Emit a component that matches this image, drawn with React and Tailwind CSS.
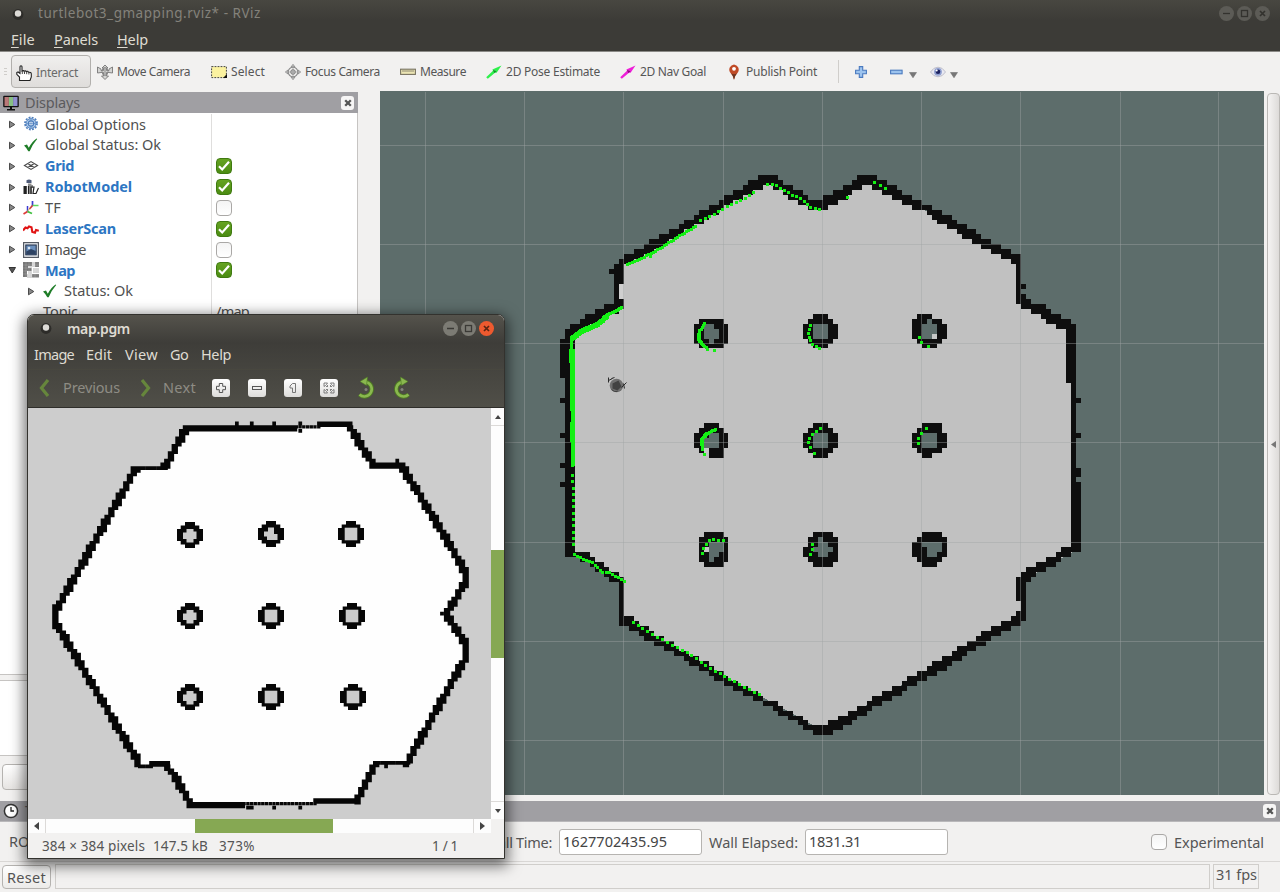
import { useLayoutEffect, useRef } from "react";

/* Single-line label whose tracking is tuned so that it spans exactly w pixels. */
function Label({ w, children, className = "" }) {
  const ref = useRef(null);
  useLayoutEffect(() => {
    const el = ref.current;
    el.style.letterSpacing = "0px";
    const natural = el.getBoundingClientRect().width;
    el.style.letterSpacing = (w - natural) / String(el.textContent).length + "px";
  }, [w]);
  return (
    <span className={"inline-block shrink-0 whitespace-pre " + className} ref={ref}>
      {children}
    </span>
  );
}

/* ---------- occupancy grid of the 3D view ---------- */
const CELL = 4.96;
const OX = 822.7 - 380;
const OY = 442.7 - 92;

// [row, firstCol, endCol]
const WALL_SPANS = [
  [-54, -13, -9], [-53, -15, -8], [-52, -16, -12], [-52, -10, -6], [-51, -18, -14], [-51, -8, -4],
  [-50, -20, -16], [-50, -7, -3], [-49, -21, -18], [-49, -5, 3], [-48, -23, -20], [-48, -3, 1],
  [-47, -25, -21], [-46, -26, -23], [-45, -28, -24], [-44, -29, -26], [-43, -31, -28], [-42, -33, -29],
  [-41, -35, -31], [-40, -36, -32], [-39, -38, -34], [-38, -40, -36], [-37, -41, -38],
  [-36, -42, -40], [-35, -43, -40], [-34, -42, -40], [-33, -42, -40], [-32, -42, -41], [-31, -42, -41], [-30, -42, -41],
  [-29, -42, -40], [-28, -44, -40], [-27, -46, -41], [-26, -48, -43], [-25, -49, -45], [-24, -51, -47], [-23, -52, -49],
  [-54, 7, 11], [-53, 6, 13], [-52, 4, 8], [-52, 10, 15], [-51, 2, 6], [-51, 12, 16], [-50, 0, 5], [-50, 14, 18],
  [-49, 16, 20], [-48, 18, 20], [-48, 20, 22], [-47, 21, 24], [-46, 22, 26], [-45, 23, 27], [-44, 25, 29],
  [-43, 27, 31], [-42, 28, 32], [-41, 30, 34], [-40, 32, 36], [-39, 34, 38], [-38, 36, 40], [-37, 38, 40],
  [-32, 40, 41], [-30, 40, 41], [-29, 40, 42], [-28, 40, 45], [-27, 42, 46], [-26, 44, 48], [-25, 45, 50], [-24, 47, 51],
  [-9, 51, 52], [-2, 51, 52], [5, 51, 52], [6, 51, 52],
  [21, 48, 52], [22, 47, 50], [23, 45, 48], [24, 43, 47], [25, 41, 45], [26, 40, 43], [27, 39, 42],
  [34, 39, 41], [35, 38, 41], [36, 36, 40], [37, 34, 38], [38, 32, 36], [39, 31, 34], [40, 29, 33], [41, 27, 31],
  [42, 26, 29], [43, 24, 28], [44, 22, 26], [45, 21, 25], [46, 19, 23], [47, 17, 21], [48, 16, 19], [49, 14, 17],
  [50, 12, 16], [51, 10, 14], [52, 9, 12], [53, 7, 10], [54, 5, 9], [55, 3, 7], [56, 1, 6], [57, -4, 4], [58, -2, 2],
  [-9, -53, -52], [-2, -53, -52], [4, -53, -52], [8, -53, -52],
  [22, -52, -47], [23, -49, -46], [24, -47, -44], [25, -46, -43], [26, -44, -41], [27, -43, -40],
  [35, -40, -38], [36, -40, -37], [37, -39, -35], [38, -37, -34], [39, -36, -32], [40, -34, -30], [41, -32, -29],
  [42, -30, -27], [43, -28, -25], [44, -27, -23], [45, -25, -22], [46, -23, -20], [47, -22, -19], [48, -20, -17],
  [49, -18, -15], [50, -16, -13], [51, -14, -12], [52, -12, -9], [53, -10, -8], [54, -9, -6], [55, -7, -4], [56, -5, -3],
];

// [col, row, width, height]
const WALL_BLOCKS = [
  [-53, -21, 1, 8], [-52, -23, 2, 46], [39, -37, 1, 9], [49, -24, 2, 12], [50, -13, 1, 22], [50, 8, 2, 14],
  [40, 27, 1, 9], [39, 27, 1, 5], [-41, 28, 1, 9],
];

const STANDARD = ["..###..", ".#####.", "##ooo##", "##ooo##", "##ooo##", ".#####.", "..###.."];
const PILLARS = [
  [-26, -26, [".......", ".#####.", "##oo###", "##ooo##", "##ooo##", "###o###", ".#####."]],
  [-4, -26, STANDARD],
  [18, -26, [".###...", "###o##.", "##ooo##", "##ooo##", "##oog##", ".#####.", "..###.."]],
  [-26, -4, ["..###..", ".#####.", "###oo##", "##ooo##", "##ooo##", ".#g###.", "...###."]],
  [-4, -4, STANDARD],
  [18, -4, ["..####.", ".#####.", "##ooo##", "##ooo##", "##ooo##", ".#####.", "..##..."]],
  [-26, 18, ["..####.", ".######", ".##ooo#", ".#gooo#", ".##oo##", ".##o###", "..####."]],
  [-4, 18, ["..####.", ".##o###", ".##oo##", "##oooo#", "###oo##", ".######", "..####."]],
  [18, 18, ["..####.", ".######", "##oooo#", "###ooo#", "###oo##", ".#####.", "..###.."]],
];

const FREE_SPACE = [
  [-11, -53], [-1, -48], [9, -53], [39, -37], [39.5, -29], [50, -24], [50.5, 22], [40, 28], [40, 35], [0, 58],
  [-40, 36], [-40, 28], [-51, 22], [-51, -23], [-41, -28], [-41, -36.5], [-39, -36.8],
];

// Laser hits: [spacing, points]
const SCANS = [
  [2.6, [627, 264, 645, 256, 660, 248, 680, 235, 697, 225]],
  [5, [700, 220, 713, 214, 727, 206, 741, 200, 757, 190]],
  [4.6, [767, 184, 774, 184, 790, 194, 802, 199, 808, 206, 822, 210]],
  [1.2, [571, 337, 580, 330, 597, 323, 606, 315, 622, 307]],
  [2, [572, 339, 582, 332, 598, 325, 608, 316]],
  [1.4, [571, 338, 571, 380, 572, 440, 572, 466]],
  [2.2, [573, 350, 573, 400, 573, 466]],
  [2.8, [570, 350, 572, 400, 571, 440]],
  [6.3, [572, 475, 573, 500, 573, 548]],
  [3.4, [574, 554, 584, 559, 592, 562, 602, 572, 608, 572, 626, 582]],
  [5.6, [633, 622, 650, 633, 670, 644, 690, 654, 708, 667, 730, 679, 762, 696]],
  [2.2, [704, 323, 699, 331, 699, 341, 705, 347, 709, 350]],
  [1.6, [698, 334, 698, 339, 704, 346]],
  [4, [810, 325, 808, 335, 811, 343, 821, 349]],
  [1.6, [715, 429, 705, 434, 701, 440, 702, 450]],
  [2, [708, 433, 702, 438, 702, 445]],
  [5, [820, 428, 811, 434, 808, 441, 811, 450]],
  [5, [702, 553, 703, 547, 710, 539, 725, 540]],
  [5, [810, 554, 812, 548, 811, 540]],
];
const STRAY_HITS = [
  [874, 182], [880, 185], [885, 188], [847, 197], [919, 337], [921, 342], [928, 346], [926, 428], [921, 433], [918, 438],
  [918, 443], [714, 350], [704, 454], [814, 453], [650, 256], [648, 254],
];

function scanHits() {
  const hits = STRAY_HITS.slice();
  SCANS.forEach(([step, p]) => {
    let carry = 0;
    for (let i = 0; i + 3 < p.length; i += 2) {
      const dx = p[i + 2] - p[i];
      const dy = p[i + 3] - p[i + 1];
      const len = Math.hypot(dx, dy);
      let d = carry;
      for (; d < len; d += step) hits.push([p[i] + (dx * d) / len, p[i + 1] + (dy * d) / len]);
      carry = d - len;
    }
  });
  return hits;
}

function cellRect(c, r, w, h) {
  const x0 = Math.round(OX + c * CELL);
  const y0 = Math.round(OY + r * CELL);
  const x1 = Math.round(OX + (c + w) * CELL);
  const y1 = Math.round(OY + (r + h) * CELL);
  return `M${x0} ${y0}H${x1}V${y1}H${x0}z`;
}

function SceneView() {
  let wall = "";
  let unknown = "";
  let faint = "";
  WALL_SPANS.forEach(([r, a, b]) => (wall += cellRect(a, r, b - a, 1)));
  WALL_BLOCKS.forEach(([c, r, w, h]) => (wall += cellRect(c, r, w, h)));
  PILLARS.forEach(([c, r, rows]) =>
    rows.forEach((line, j) =>
      [...line].forEach((ch, i) => {
        if (ch === "#") wall += cellRect(c + i, r + j, 1, 1);
        if (ch === "o") unknown += cellRect(c + i, r + j, 1, 1);
        if (ch === "g") faint += cellRect(c + i, r + j, 1, 1);
      })
    )
  );
  const free = FREE_SPACE.map(([c, r]) => `${OX + c * CELL},${OY + r * CELL}`).join(" ");
  const hits = scanHits()
    .map(([x, y]) => `M${Math.round(x - 380) - 1} ${Math.round(y - 92) - 1}h3v3h-3z`)
    .join("");
  return (
    <svg className="block h-[703px] w-[884px] bg-[#5d6d6b]" viewBox="0 0 884 703" shapeRendering="crispEdges">
      <polygon points={free} fill="#c1c1c1" />
      <path d={unknown} fill="#5d6d6b" />
      <path d={faint} fill="#c6c8c7" />
      <path d={wall} fill="#0e0e0e" />
      <path d={cellRect(-41, -32, 1, 3)} fill="#cfcfcf" />
      <g fill="#a0a5a4" fillOpacity=".42">
        {[45, 144, 243, 343, 442, 541, 640, 740, 838].map((x) => (
          <rect key={x} x={x} y="0" width="1" height="703" />
        ))}
        {[53, 152, 251, 350, 450, 549, 648].map((y) => (
          <rect key={y} x="0" y={y} width="884" height="1" />
        ))}
      </g>
      <path d={hits} fill="#14f014" />
      <g shapeRendering="auto" transform="translate(236.5 293.5)">
        <circle r="6.8" fill="#6f6f6f" />
        <path d="M-4-2L2-5 5 1 1 5-4 3z" fill="#424242" />
        <path d="M-8-8v5M-8-5l4-2M-5-7l3-1M7-2l1 5M5 2l5-5" stroke="#2b2b2b" strokeWidth="1" fill="none" />
        <path d="M-5 4l3 2 3 0" stroke="#444" fill="none" />
      </g>
    </svg>
  );
}

/* ---------- map picture in the viewer ---------- */
const PX = 3.73;
// [x0, y0, x1, y1, brush]
const EDGES = [
  [187, 429, 294, 429, 1.7], [294, 427, 318, 427, 0.9], [319, 425, 349, 425, 1.5], [350, 427, 373, 464, 1.7], [373, 465, 400, 465, 1.7],
  [401, 465, 467, 574, 1.7], [467, 574, 467, 581, 1.7], [467, 581, 447, 613, 1.7], [447, 616, 467, 646, 1.7], [467, 646, 467, 655, 1.7],
  [467, 655, 407, 763, 1.7], [407, 763, 376, 763, 1], [376, 764, 357, 801, 1.7], [357, 801, 315, 802, 1.5], [315, 804, 190, 804, 0.9],
  [241, 806, 191, 806, 1.7], [190, 803, 168, 766, 1.7], [168, 765, 152, 765, 1.6], [152, 767, 140, 767, 1], [139, 764, 55, 622, 1.7], [55, 622, 55, 612, 1.7],
  [55, 612, 136, 468, 1.7], [136, 467, 165, 467, 1], [165, 466, 186, 430, 1.7],
];
const SPECKS = [
  [238, 423], [253, 423], [275, 423], [301, 423], [301, 430], [397, 460], [443, 615], [247, 808], [251, 808], [275, 808], [301, 808], [386, 767],
];
const SMALL_PILLARS = [
  [190, 535], [271, 534], [351, 534], [190, 616], [271, 616], [352, 616], [190, 697], [271, 697], [353, 697],
];

function MapPicture() {
  let d = "";
  const put = (x, y, s) => {
    const q = (v) => Math.round(v / PX) * PX;
    const h = s * PX;
    d += `M${(q(x - h / 2) - 28).toFixed(1)} ${(q(y - h / 2) - 408).toFixed(1)}h${h}v${h}h${-h}z`;
  };
  EDGES.forEach(([x0, y0, x1, y1, s]) => {
    const n = Math.max(1, Math.round((Math.max(Math.abs(x1 - x0), Math.abs(y1 - y0)) * 2) / PX));
    for (let i = 0; i <= n; i++) put(x0 + ((x1 - x0) * i) / n, y0 + ((y1 - y0) * i) / n, s);
  });
  SPECKS.forEach(([x, y]) => put(x, y, 1));
  return (
    <svg className="block h-[411px] w-[463px] bg-[#cdcdcd]" viewBox="0 0 463 411">
      <path
        d="M159 20L269 20 290 18 321 18 344 57 372 57 439 167 439 172 419 207 439 238 439 246 379 355 348 355 329 394 162 397 140 358 111 358 27 212 27 205 108 59 138 59z"
        fill="#fefefe"
      />
      <path d={d} fill="#060606" />
      {SMALL_PILLARS.map(([x, y], i) => (
        <g key={i} transform={`translate(${x - 28} ${y - 408})`}>
          <path d="M-5-13H5V-9.500H9.300V-6H13V6H9.300V9.500H5V13H-5V9.500H-9.300V6H-13V-6H-9.300V-9.500H-5z" fill="#070707" />
          <path
            d={
              i % 3 === 0
                ? "M-7-2.500H-3.500V-6H3.500V-3.500H6.500V4H3.500V7.500H-3.500V4H-7z"
                : i === 1
                ? "M-7-2.500H-3V-6.500H3V0H6.500V6H-4V2.500H-7z"
                : "M-6.300-6.300H6.300V6.300H-6.300z"
            }
            fill="#cbcbcb"
          />
        </g>
      ))}
    </svg>
  );
}

/* ---------- icons ---------- */
const I = ({ children, size = "h-4 w-4", box = "0 0 16 16" }) => (
  <svg className={"block shrink-0 " + size} viewBox={box} fill="none">
    {children}
  </svg>
);

const HandIcon = () => (
  <I>
    <path
      d="M3.500 15.500V12L.8 9.300V7.500L2 7 4 8.500V1.800Q4 .8 5 .8T6 1.800V6Q7.500 5 8 6.300 9.500 5.300 10.200 6.600 12 5.800 12.500 7.200 15.300 7 15.300 9V12L14 15.500z"
      fill="#fff"
      stroke="#222"
      strokeWidth="1.100"
    />
    <path d="M6.300 6V9M8.500 6.500V9M10.700 7V9.200M12.900 7.500V9.500" stroke="#333" strokeWidth=".9" />
  </I>
);
const MoveIcon = () => (
  <I>
    <path d="M8 1L11 4H9.500V6.500H12V5L15.500 3V9L12 8.500H9.500V12H11.500L8 15.500 4.500 12H6.500V8.500H4L.5 9V3L4 5V6.500H6.500V4H5z" fill="#d5d5d3" stroke="#777" strokeWidth=".9" />
    <ellipse cx="8" cy="7.500" rx="3" ry="4" stroke="#8b8b8b" />
    <path d="M8 4V11" stroke="#8b8b8b" />
  </I>
);
const SelectIcon = () => (
  <I>
    <rect x=".6" y="2.600" width="14.800" height="11" fill="#fbf2a0" stroke="#444" strokeDasharray="1.800 1.200" />
    <path d="M16 10V14H12z" fill="#111" />
  </I>
);
const FocusIcon = () => (
  <I>
    <path d="M8 .3L10 3H6zM8 15.700L6 13H10zM.3 8L3 6V10zM15.700 8L13 10V6z" fill="#ccc" stroke="#888" strokeWidth=".8" />
    <circle cx="8" cy="8" r="4.800" stroke="#8c8c8c" strokeWidth="1.200" />
    <circle cx="8" cy="8" r="2.300" fill="#c5c5c5" stroke="#7c7c7c" />
    <path d="M8 3V13M3 8H13" stroke="#999" strokeWidth=".7" />
  </I>
);
const RulerIcon = () => (
  <I>
    <rect x=".6" y="5.200" width="14.800" height="5.200" fill="#ece5b4" stroke="#777260" strokeWidth="1.100" />
    <path d="M3 6V8M5 6V8M7 6V8M9 6V8M11 6V8M13 6V8" stroke="#777260" strokeWidth=".8" />
  </I>
);
const ArrowIcon = ({ fill, dark }) => (
  <I>
    <path d="M15.500 1.500L10.600 8.800 9 8.800 1.800 14.800.2 13.200 7 6.800 6.400 5.500z" fill={fill} />
    <path d="M7 6L10.600 7.300 8.200 9z" fill={dark} />
  </I>
);
const PinIcon = () => (
  <I>
    <path d="M8 15.800Q7.300 11.800 4 8.300A5.300 5.300 0 0 1 8 .4 5.300 5.300 0 0 1 12 8.300Q8.700 11.800 8 15.800z" fill="#c04a26" />
    <path d="M8 15.800Q7.300 11.800 5 9.300 8 11 11 9.300 8.700 11.800 8 15.800z" fill="#6b3420" />
    <circle cx="8" cy="4.800" r="1.900" fill="#fff" />
  </I>
);
const PlusIcon = () => (
  <I size="h-3 w-3" box="0 0 12 12">
    <path d="M4.300.6H7.700V4.300H11.400V7.700H7.700V11.400H4.300V7.700H.6V4.300H4.300z" fill="#9cc3ee" stroke="#4a7abf" strokeWidth="1.100" />
  </I>
);
const MinusIcon = () => (
  <I size="h-3 w-[13px]" box="0 0 13 12">
    <rect x=".6" y="4.200" width="11.500" height="3.600" fill="#9cc3ee" stroke="#4a7abf" strokeWidth="1.100" />
  </I>
);
const EyeIcon = () => (
  <I>
    <path d="M.5 8Q3.500 3.200 8 3.200T15.500 8Q12.500 12.800 8 12.800T.5 8z" fill="#e9e9f2" stroke="#bdbdc9" />
    <circle cx="8" cy="7.800" r="3.900" fill="#8f9fd0" />
    <circle cx="8" cy="7.800" r="2.300" fill="#1c2260" />
    <circle cx="6.700" cy="6.500" r="1" fill="#fff" />
  </I>
);
const DropIcon = () => (
  <I size="h-[6px] w-2" box="0 0 8 6">
    <path d="M.5.5H7.500L4 5.800z" fill="#777" stroke="#666" strokeWidth=".5" />
  </I>
);
const MonitorIcon = () => (
  <I>
    <rect x=".2" y=".7" width="15.600" height="11.600" rx="1" fill="#111" />
    <rect x="1.500" y="2" width="4.400" height="9" fill="#b97878" />
    <rect x="5.900" y="2" width="4.200" height="9" fill="#86bf84" />
    <rect x="10.100" y="2" width="4.400" height="9" fill="#9090cf" />
    <path d="M7 12H9V14H12V15.500H4V14H7z" fill="#111" />
  </I>
);
const GearIcon = () => (
  <I>
    <circle cx="8" cy="7.500" r="6" stroke="#4f7fbd" strokeWidth="1.800" strokeDasharray="1.900 1.240" />
    <circle cx="8" cy="7.500" r="4.900" fill="#a9c8ea" stroke="#4f7fbd" strokeWidth=".9" />
    <circle cx="8" cy="7.500" r="2.600" fill="#e5eef9" stroke="#4f7fbd" strokeWidth="1.200" />
    <path d="M8 3V12M3.500 7.500H12.500" stroke="#4f7fbd" strokeWidth=".6" />
  </I>
);
const CheckIcon = () => (
  <I>
    <path d="M1 8.500L4 7.600 5.800 10.800Q9 4.500 13.600 1.500L14.200 2Q9.700 7 6.700 14.300H5.300Q3.500 10.800 1 8.500z" fill="#1f7d28" />
  </I>
);
const GridIcon = () => (
  <I>
    <path d="M1.500 7.500L8 3.600 14.500 7.500 8 11.400zM4.700 5.500L11.300 9.500M11.300 5.500L4.700 9.500" stroke="#4a4a4a" strokeWidth="1.200" />
  </I>
);
const RobotIcon = () => (
  <I>
    <path d="M3.500 1.300Q6 -.3 8.500 1.300V4H3.500z" fill="#4f5b78" />
    <path d="M5 4.500H8.500V6H10L10 9H9V15H6V9H5z" fill="#8f8f8f" />
    <path d="M.5 7H3.800V15H.5z" fill="#222" />
    <path d="M5.500 7V15M8 7.500V15M8 8L11 8 10 14.500H13L15.500 9" stroke="#222" strokeWidth="1.200" />
  </I>
);
const TfIcon = () => (
  <I>
    <path d="M9.500 1V6" stroke="#3b3bd0" strokeWidth="1.700" />
    <path d="M9.500 5.500H15.500" stroke="#5fd85f" strokeWidth="1.500" />
    <path d="M9.500 5.500L6.500 9" stroke="#d03b3b" strokeWidth="1.700" />
    <path d="M4.500 6V11.500" stroke="#3b3bd0" strokeWidth="1.500" />
    <path d="M4.500 11.500L.5 14" stroke="#e03b3b" strokeWidth="1.700" />
    <path d="M4.500 11.500L9 13.500" stroke="#3fc03f" strokeWidth="1.700" />
    <path d="M4.500 11L7 8.500" stroke="#c9b03b" />
  </I>
);
const ScanIcon = () => (
  <I>
    <path d="M0 9.500L2.500 6.500 4.500 7.200 6 5.500 8.500 6.300 9.300 11 12 11.700 13 9 15.800 9.700" stroke="#e11414" strokeWidth="2.100" />
  </I>
);
const ImageIcon = () => (
  <I>
    <rect x=".6" y=".6" width="14.800" height="14.800" fill="#eceff3" stroke="#555a63" strokeWidth="1.200" />
    <rect x="2.800" y="3" width="10.400" height="9.800" fill="#6a8fbd" stroke="#27364e" strokeWidth="1.100" />
    <path d="M3.300 9.500L8 7 12.800 9V12.300H3.300z" fill="#2d4263" />
    <circle cx="6" cy="6" r="1.300" fill="#d9e6f3" />
  </I>
);
const MapIcon = () => (
  <I>
    <path d="M0 0H9V4H5V9H4V15H0z" fill="#777" />
    <path d="M12 0H16V5H12zM9 12H16V15.500H9z" fill="#808080" />
    <path d="M9 0H12V5H9zM5 4H9V12H5zM4 12H9V16H4zM10 6H16V11H10z" fill="#d4d4d4" />
    <path d="M5 6H8.500V9H5z" fill="#777" />
    <path d="M3 0V16M6 0V16M9 0V16M12 0V16M0 3H16M0 6H16M0 9H16M0 12H16" stroke="#fff" strokeOpacity=".3" strokeWidth=".5" />
  </I>
);
const ClockIcon = () => (
  <I>
    <circle cx="8" cy="8" r="6.600" fill="#fff" stroke="#333" strokeWidth="1.500" />
    <path d="M8 4V8H11" stroke="#222" strokeWidth="1.300" />
  </I>
);

const Expander = ({ open }) => (
  <I size="h-[9px] w-[9px]" box="0 0 9 9">
    {open ? <path d="M1 1.500H7.500L4.250 7z" fill="#555" stroke="#333" /> : <path d="M1.500 1.200L6.800 4.500 1.500 7.800z" fill="#888" stroke="#4a4a4a" />}
  </I>
);

function Checkbox({ on }) {
  return on ? (
    <span className="flex h-4 w-4 items-center justify-center rounded-[4px] border border-[#3f7a10] bg-linear-to-b from-[#65a321] to-[#4b8c12]">
      <I size="h-[14px] w-[14px]" box="0 0 14 14">
        <path d="M2 7.200L5.200 10.500 12 2.800" stroke="#fff" strokeWidth="2.200" />
      </I>
    </span>
  ) : (
    <span className="block h-4 w-4 rounded-[4px] border border-[#aaa8a6] bg-linear-to-b from-[#f4f4f4] to-white" />
  );
}

function DockClose() {
  return (
    <span className="flex h-[14px] w-[13px] items-center justify-center rounded-[3px] bg-[#f6f5f5]">
      <I size="h-[8px] w-[8px]" box="0 0 8 8">
        <path d="M1.200 1.200L6.800 6.800M6.800 1.200L1.200 6.800" stroke="#555" strokeWidth="2.300" />
      </I>
    </span>
  );
}

/* ---------- main window ---------- */
const TOOLS = [
  [MoveIcon, "Move Camera", 73],
  [SelectIcon, "Select", 34],
  [FocusIcon, "Focus Camera", 75],
  [RulerIcon, "Measure", 46],
  [() => <ArrowIcon fill="#2ff04c" dark="#158d2a" />, "2D Pose Estimate", 94],
  [() => <ArrowIcon fill="#ee1fd8" dark="#8b107d" />, "2D Nav Goal", 66],
  [PinIcon, "Publish Point", 71],
];

const ROWS = [
  [GearIcon, "Global Options", 101, false, null],
  [CheckIcon, "Global Status: Ok", 116, false, null],
  [GridIcon, "Grid", 29, true, true],
  [RobotIcon, "RobotModel", 87, true, true],
  [TfIcon, "TF", 16, false, false],
  [ScanIcon, "LaserScan", 71, true, true],
  [ImageIcon, "Image", 41, false, false],
  [MapIcon, "Map", 30, true, true],
];

function TitleButtons({ active }) {
  const ring = active ? "bg-[#7c7b74]" : "bg-[#5c5b56]";
  const ink = active ? "#3b3a36" : "#33322e";
  const size = " flex h-[15px] w-[15px] items-center justify-center rounded-full";
  return (
    <div className="flex gap-[3px]">
      <span className={ring + size}>
        <I size="h-[15px] w-[15px]" box="0 0 15 15"><path d="M4 7.500H11" stroke={ink} strokeWidth="1.300" /></I>
      </span>
      <span className={ring + size}>
        <I size="h-[15px] w-[15px]" box="0 0 15 15"><rect x="4.500" y="4.500" width="6" height="6" stroke={ink} strokeWidth="1.300" /></I>
      </span>
      <span className={(active ? "bg-[#ee5a2f]" : ring) + size}>
        <I size="h-[15px] w-[15px]" box="0 0 15 15">
          <path d="M5 5L10 10M10 5L5 10" stroke={active ? "#5a2412" : ink} strokeWidth="1.700" />
        </I>
      </span>
    </div>
  );
}

const AppDot = () => (
  <I>
    <circle cx="8" cy="8.500" r="5.400" fill="#2d2c29" />
    <circle cx="8" cy="7.500" r="3.200" fill="#dcdad6" />
  </I>
);

function MainHeader() {
  return (
    <header className="h-[52px] shrink-0 border-b border-[#8b8a87] bg-linear-to-b from-[#484741] to-[#3c3b37] to-40% text-[#dfdbd2]">
      <div className="flex h-[27px] items-center pr-[10px] pl-[10px]">
        <AppDot />
        <Label w={223} className="ml-3 text-[13.500px] text-[#84827b]">turtlebot3_gmapping.rviz* - RViz</Label>
        <div className="ml-auto"><TitleButtons /></div>
      </div>
      <nav className="flex h-[24px] items-center gap-[19px] pt-[2px] pl-[11px] text-[14.500px]">
        <Label w={24}><u className="underline-offset-2">F</u>ile</Label>
        <Label w={44}><u className="underline-offset-2">P</u>anels</Label>
        <Label w={31}><u className="underline-offset-2">H</u>elp</Label>
      </nav>
    </header>
  );
}

function Toolbar() {
  return (
    <div className="flex h-[39px] shrink-0 items-center bg-[#f2f1f0] text-[12px] text-[#565656]">
      <div className="flex w-[11px] flex-col gap-[2px] pl-1">
        {[0, 1, 2].map((i) => <span key={i} className="h-px w-[3px] bg-[#cfcdca]" />)}
      </div>
      <div className="flex h-[33px] w-20 items-center gap-1 rounded-[4px] border border-[#b2b0ad] bg-linear-to-b from-[#f0efee] to-[#dfdddb] pt-[2px] pl-1 text-[#6a6a6a]">
        <HandIcon />
        <Label w={42}>Interact</Label>
      </div>
      <div className="ml-[6px] flex items-center gap-5 pt-px">
        {TOOLS.map(([Icon, text, w], i) => (
          <div key={text} className={i === 1 ? "ml-px flex items-center gap-1" : "flex items-center gap-1"}>
            <Icon />
            <Label w={w}>{text}</Label>
          </div>
        ))}
      </div>
      <span className="ml-[21px] h-[23px] w-px bg-[#d0cecb]" />
      <div className="ml-[16px] flex items-center">
        <PlusIcon />
        <span className="w-[23px]" />
        <MinusIcon />
        <span className="mt-[6px] ml-[6px]"><DropIcon /></span>
        <span className="w-[13px]" />
        <EyeIcon />
        <span className="mt-[6px] ml-1"><DropIcon /></span>
      </div>
    </div>
  );
}

function DisplaysDock() {
  return (
    <aside className="flex w-[358px] shrink-0 flex-col">
      <div className="mt-px flex h-[21px] shrink-0 items-center bg-[#a09fa3] pr-1 pl-[3px] text-[14.500px] text-[#5b5a5d]">
        <MonitorIcon />
        <Label w={55} className="ml-[6px]">Displays</Label>
        <div className="ml-auto"><DockClose /></div>
      </div>
      <div className="relative h-[562px] shrink-0 overflow-hidden border-r border-b border-[#c6c4c2] bg-white pt-px text-[14.500px] text-[#505050]">
        {ROWS.map(([Icon, text, w, bold, check], i) => (
          <div key={text} className="flex h-[20.860px] items-center">
            <div className="flex h-full w-[212px] items-center border-r border-[#dfdedd] pl-2">
              <Expander open={i === 7} />
              <span className="ml-[6px]"><Icon /></span>
              <Label w={w} className={bold ? "ml-[6px] font-bold text-[#2d76c3]" : "ml-[6px]"}>{text}</Label>
            </div>
            {check !== null && <span className="ml-1"><Checkbox on={check} /></span>}
          </div>
        ))}
        <div className="flex h-[20.860px] w-[212px] items-center border-r border-[#dfdedd] pl-[27px]">
          <Expander />
          <span className="ml-[6px]"><CheckIcon /></span>
          <Label w={69} className="ml-[6px]">Status: Ok</Label>
        </div>
        <div className="flex h-[20.860px] items-center">
          <div className="flex h-full w-[212px] items-center border-r border-[#dfdedd] pl-[43px]"><Label w={35}>Topic</Label></div>
          <Label w={33} className="ml-1">/map</Label>
        </div>
      </div>
      <div className="mt-[5px] h-[76px] shrink-0 border border-l-0 border-[#c6c4c2] bg-white" />
      <div className="mt-2 ml-[2px] h-[26px] w-[110px] shrink-0 rounded-[4px] border border-[#b5b3b0] bg-linear-to-b from-white to-[#e6e4e2]" />
    </aside>
  );
}

function TimePanel() {
  const field = "flex h-[26px] items-center rounded-[3px] border border-[#b6b4b1] bg-white pl-[3px] text-[#444]";
  return (
    <section className="mt-[6px] shrink-0 text-[14.500px] text-[#555]">
      <div className="flex h-[21px] items-center border-b border-[#b9b8ba] bg-[#a09fa3] pr-1 pl-[3px]">
        <ClockIcon />
        <Label w={32} className="ml-[6px] text-[#5b5a5d]">Time</Label>
        <div className="ml-auto"><DockClose /></div>
      </div>
      <div className="flex h-[40px] items-center border-b border-[#d9d7d5] pl-[9px]">
        <Label w={69} className="pt-px">ROS Time:</Label>
        <span className="w-[407px]" />
        <Label w={67} className="pt-[2px]">Wall Time:</Label>
        <div className={field + " ml-[7px] w-[143px]"}><Label w={104}>1627702435.95</Label></div>
        <Label w={89} className="ml-[7px] pt-[2px]">Wall Elapsed:</Label>
        <div className={field + " ml-[7px] w-[143px]"}><Label w={52}>1831.31</Label></div>
        <span className="ml-auto"><Checkbox /></span>
        <Label w={90} className="mr-4 ml-[7px] pt-[2px]">Experimental</Label>
      </div>
    </section>
  );
}

function StatusBar() {
  return (
    <footer className="flex min-h-0 flex-1 items-start gap-[4px] pt-[2px] text-[14.500px] text-[#555]">
      <div className="mt-px ml-[2px] flex h-[24px] w-[49px] items-center rounded-[4px] border border-[#b5b3b0] bg-linear-to-b from-white to-[#ecebe9] pt-[2px] pl-1">
        <Label w={39}>Reset</Label>
      </div>
      <div className="h-[25px] w-[1155px] border border-[#d0cecb]" />
      <div className="-ml-[1px] h-[25px] w-[46px] border border-[#d0cecb] pl-[2px] leading-[18px]"><Label w={41}>31 fps</Label></div>
    </footer>
  );
}

/* ---------- image viewer window ---------- */
function ZoomTile({ children }) {
  return (
    <span className="flex h-[18px] w-[18px] items-center justify-center rounded-[3px] bg-linear-to-b from-white to-[#dddcda]">
      <I size="h-[18px] w-[18px]" box="0 0 18 18">{children}</I>
    </span>
  );
}

function RotateIcon({ flip }) {
  return (
    <I size="h-6 w-5" box="0 0 20 24">
      <g transform={flip ? "translate(20 0) scale(-1 1)" : undefined}>
        <path d="M2.500 18.500A7.300 7.300 0 1 0 9 6" stroke="#4e7b23" strokeWidth="4.400" />
        <path d="M2.500 18.500A7.300 7.300 0 1 0 9 6" stroke="#8ab84f" strokeWidth="2.600" />
        <path d="M10.500 1L3 5.500 9.500 9.500z" fill="#8ab84f" stroke="#4e7b23" strokeWidth=".6" />
        <circle cx="9" cy="13.500" r="1.500" fill="#82817b" />
      </g>
    </I>
  );
}

function ViewerWindow() {
  return (
    <div className="absolute top-[314px] left-[27px] flex h-[545px] w-[478px] flex-col overflow-hidden rounded-t-[7px] border border-[#33322e] bg-[#f2f1f0] shadow-[0_4px_14px_3px_rgba(0,0,0,0.55)]">
      <div className="flex h-[93px] shrink-0 flex-col border-b border-[#2f2e2a] bg-linear-to-b from-[#55534c] via-[#3e3d39] via-30% to-[#504f48] text-[#dfdbd2]">
        <div className="flex h-[26px] shrink-0 items-center pr-[10px] pl-[10px]">
          <AppDot />
          <Label w={63} className="ml-[13px] text-[14px] font-semibold">map.pgm</Label>
          <div className="ml-auto"><TitleButtons active /></div>
        </div>
        <nav className="flex h-[28px] shrink-0 items-center pl-[6px] text-[14.500px]">
          <Label w={40}>Image</Label>
          <Label w={26} className="ml-[12px]">Edit</Label>
          <Label w={33} className="ml-[13px]">View</Label>
          <Label w={18} className="ml-[12px]">Go</Label>
          <Label w={30} className="ml-[13px]">Help</Label>
        </nav>
        <div className="flex h-[37px] items-center border-t border-[#48473f] pl-[10px] text-[14.500px] text-[#8e8c84]">
          <I size="h-5 w-3" box="0 0 12 20"><path d="M10 2L3.500 10 10 18" stroke="#66863c" strokeWidth="3.200" /></I>
          <Label w={57} className="ml-[13px]">Previous</Label>
          <span className="ml-[20px]"><I size="h-5 w-3" box="0 0 12 20"><path d="M2 2L8.500 10 2 18" stroke="#66863c" strokeWidth="3.200" /></I></span>
          <Label w={33} className="ml-[11px]">Next</Label>
          <div className="ml-[16px] flex gap-[18px]">
            <ZoomTile><path d="M7.300 4.500H10.700V7.300H13.500V10.700H10.700V13.500H7.300V10.700H4.500V7.300H7.300z" stroke="#555" /></ZoomTile>
            <ZoomTile><rect x="4.500" y="7.500" width="9" height="3" stroke="#555" /></ZoomTile>
            <ZoomTile><path d="M8.500 4.500H11.500V13.500H8.500V9H6V7z" stroke="#777" /></ZoomTile>
            <ZoomTile>
              <path d="M4 4H7.500L6.500 5.500 8 7 7 8 5.500 6.500 4 7.500zM14 4H10.500L11.500 5.500 10 7 11 8 12.500 6.500 14 7.500zM4 14H7.500L6.500 12.500 8 11 7 10 5.500 11.500 4 10.500zM14 14H10.500L11.500 12.500 10 11 11 10 12.500 11.500 14 10.500z" stroke="#666" strokeWidth=".8" />
            </ZoomTile>
          </div>
          <span className="ml-[19px]"><RotateIcon /></span>
          <span className="ml-[14px]"><RotateIcon flip /></span>
        </div>
      </div>
      <div className="flex h-[411px] shrink-0">
        <MapPicture />
        <div className="flex w-[13px] flex-col items-center bg-[#fdfdfd]">
          <span className="flex h-[18px] w-full items-center justify-center border-b border-[#dcdad8]">
            <I size="h-1 w-[6px]" box="0 0 6 4"><path d="M3 0L6 4H0z" fill="#444" /></I>
          </span>
          <span className="mt-[124px] h-[108px] w-full bg-[#86a853]" />
          <span className="mt-auto flex h-[18px] w-full items-center justify-center border-t border-[#dcdad8]">
            <I size="h-1 w-[6px]" box="0 0 6 4"><path d="M0 0H6L3 4z" fill="#444" /></I>
          </span>
        </div>
      </div>
      <div className="flex h-[14px] w-[463px] shrink-0 items-center bg-[#fdfdfd]">
        <span className="flex h-full w-[18px] items-center justify-center border-r border-[#dcdad8]">
          <I size="h-[8px] w-[5px]" box="0 0 5 8"><path d="M5 0V8L0 4z" fill="#444" /></I>
        </span>
        <span className="ml-[149px] h-full w-[138px] bg-[#86a853]" />
        <span className="ml-auto flex h-full w-[18px] items-center justify-center border-l border-[#dcdad8]">
          <I size="h-[8px] w-[5px]" box="0 0 5 8"><path d="M0 0V8L5 4z" fill="#444" /></I>
        </span>
      </div>
      <div className="flex min-h-0 flex-1 items-center pt-[2px] pr-[46px] pl-[14px] text-[13.500px] text-[#555]">
        <Label w={103}>384 × 384 pixels</Label>
        <Label w={55} className="ml-2">147.5 kB</Label>
        <Label w={36} className="ml-[11px]">373%</Label>
        <Label w={26} className="ml-auto">1 / 1</Label>
      </div>
    </div>
  );
}

export default function App() {
  return (
    <div className="relative flex h-[892px] w-[1280px] flex-col overflow-hidden bg-[#f2f1f0] font-['Noto_Sans','Open_Sans',sans-serif]">
      <MainHeader />
      <Toolbar />
      <div className="flex h-[704px] shrink-0">
        <DisplaysDock />
        <main className="ml-[22px] bg-[#5d6d6b] pt-px"><SceneView /></main>
        <div className="flex w-4 items-center justify-center pt-[2px] pl-[2px]">
          <span className="flex h-full w-[13px] items-center justify-center rounded-[4px] border border-[#bab8b5] bg-linear-to-r from-[#f5f4f3] to-[#dddbd9]">
            <I size="h-[7px] w-[5px]" box="0 0 5 7"><path d="M5 0V7L0 3.500z" fill="#777" /></I>
          </span>
        </div>
      </div>
      <TimePanel />
      <StatusBar />
      <ViewerWindow />
    </div>
  );
}
